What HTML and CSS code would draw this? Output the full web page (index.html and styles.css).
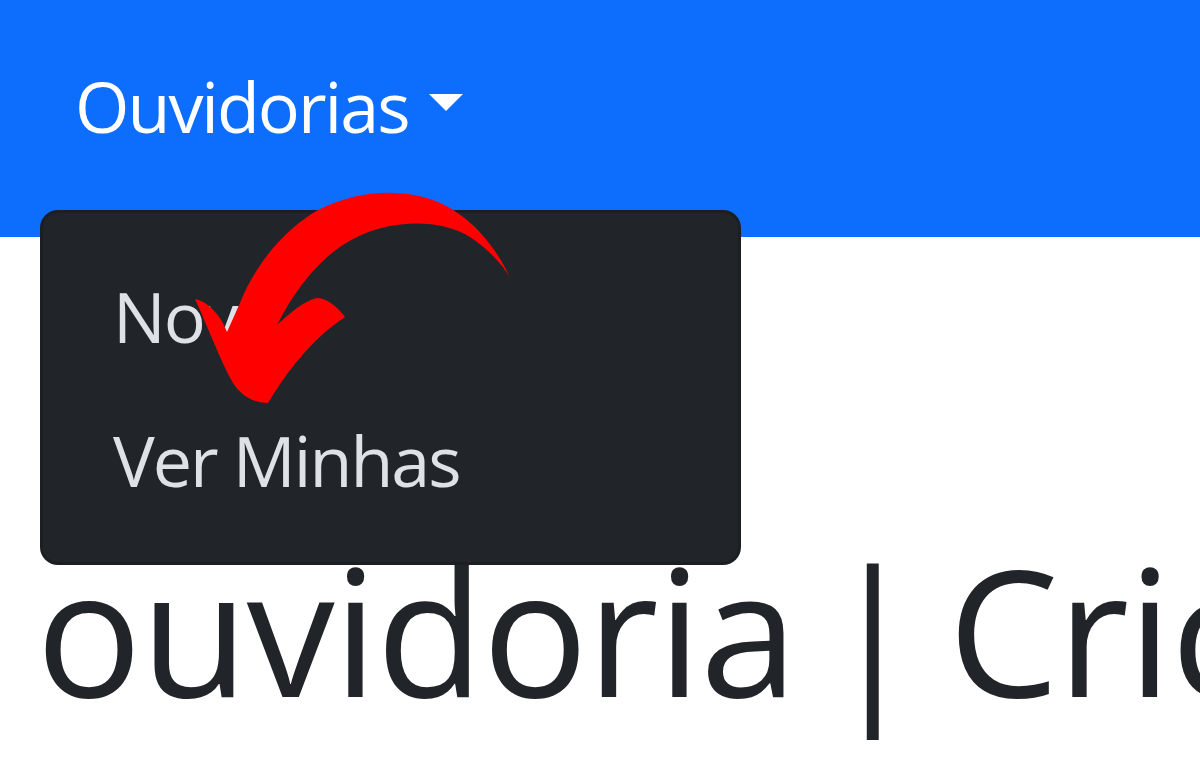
FILE: index.html
```html
<!DOCTYPE html>
<html lang="pt-BR">
<head>
<meta charset="utf-8">
<title>Ouvidoria</title>
<link rel="stylesheet" href="styles.css">
</head>
<body>
<nav class="navbar">
  <div class="nav-item">
    <a class="nav-link" href="#">Ouvidorias<span class="caret"></span></a>
    <ul class="dropdown-menu">
      <li><a class="dropdown-item" href="#">Nova</a></li>
      <li><a class="dropdown-item" href="#">Ver Minhas</a></li>
    </ul>
  </div>
</nav>
<main class="container">
  <h1 class="title">ouvidoria | Cricaré</h1>
</main>
<svg class="arrow" width="1200" height="780" viewBox="0 0 1200 780" aria-hidden="true">
  <path fill="#ff0000" d="M510,278 C498,250 470,212 430,199 C395,188 355,192 320,209 C285,228 255,265 240,303 L227,332 C222,318 210,302 195,299 C205,320 220,360 233,383 C242,397 255,403 268,403 C285,375 310,340 345,317 C338,308 328,298 317,298 C305,300 290,313 277,325 C295,290 320,255 357,237 C390,220 440,218 470,237 C490,250 505,268 510,278 Z"/>
</svg>
</body>
</html>
```
FILE: styles.css
```css
html, body {
  margin: 0;
  padding: 0;
}
body {
  width: 1200px;
  height: 780px;
  overflow: hidden;
  background: #ffffff;
  font-family: "Open Sans", "Noto Sans", sans-serif;
  color: #212529;
}
.navbar {
  box-sizing: border-box;
  height: 237px;
  background: #0d6efd;
  padding: 18px 40px 0;
  display: flex;
  align-items: flex-start;
}
.nav-item {
  position: relative;
}
.nav-link {
  display: block;
  padding: 35px 35px;
  font-size: 70px;
  line-height: 106px;
  letter-spacing: -2px;
  color: #ffffff;
  text-decoration: none;
  white-space: nowrap;
}
.caret {
  display: inline-block;
  margin-left: 20px;
  vertical-align: 22px;
  border-top: 17px solid #ffffff;
  border-left: 17px solid transparent;
  border-right: 17px solid transparent;
}
.dropdown-menu {
  position: absolute;
  left: 0;
  top: calc(100% + 16px);
  z-index: 10;
  box-sizing: border-box;
  width: 701px;
  margin: 0;
  padding: 31px 0 30px;
  list-style: none;
  background: #212529;
  border: 3px solid rgba(0, 0, 0, 0.15);
  border-radius: 18px;
}
.dropdown-item {
  display: block;
  padding: 19px 70px;
  font-size: 70px;
  line-height: 106px;
  letter-spacing: -2px;
  color: #dee2e6;
  text-decoration: none;
  white-space: nowrap;
}
.container {
  padding: 287px 36px 0;
}
.title {
  margin: 0;
  font-size: 176px;
  font-weight: 400;
  line-height: 1.2;
  letter-spacing: -1.5px;
  word-spacing: -16px;
  white-space: nowrap;
  color: #212529;
}
.arrow {
  position: absolute;
  left: 0;
  top: 0;
  z-index: 20;
  pointer-events: none;
}
```
